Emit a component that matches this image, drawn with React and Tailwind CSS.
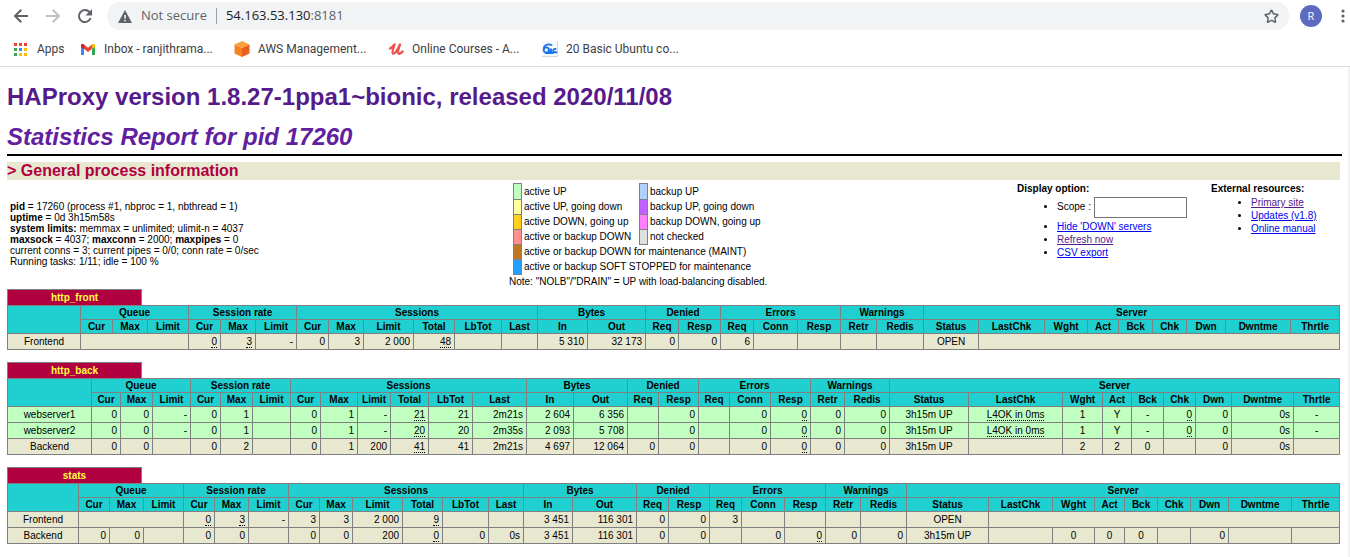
import React from "react";
import { Star } from "lucide-react";

const tip = (text) => ({ text, tip: true });
const blank = (span) => ({ text: "", span });

const GROUPS = [
  ["Queue", 3],
  ["Session rate", 3],
  ["Sessions", 6],
  ["Bytes", 2],
  ["Denied", 2],
  ["Errors", 3],
  ["Warnings", 2],
  ["Server", 9],
];

const COLUMNS = [
  "Cur", "Max", "Limit", "Cur", "Max", "Limit",
  "Cur", "Max", "Limit", "Total", "LbTot", "Last",
  "In", "Out", "Req", "Resp", "Req", "Conn", "Resp", "Retr", "Redis",
  "Status", "LastChk", "Wght", "Act", "Bck", "Chk", "Dwn", "Dwntme", "Thrtle",
];

const CENTERED = new Set([21, 22, 23, 24, 25, 29]);

const PROXIES = [
  {
    name: "http_front",
    widths: [73, 32, 35, 41, 32, 35, 41, 32, 35, 50, 41, 47, 36, 50, 58, 33, 42, 33, 44, 43, 36, 47, 55, 66, 43, 31, 34, 34, 39, 65, 49],
    rows: [
      {
        name: "Frontend",
        cells: [blank(3), tip("0"), tip("3"), "-", "0", "3", "2 000", tip("48"), "", "", "5 310", "32 173", "0", "0", "6", "", "", "", "", "OPEN", blank(8)],
      },
    ],
  },
  {
    name: "http_back",
    widths: [84, 29, 32, 38, 30, 32, 38, 30, 37, 33, 38, 44, 54, 47, 54, 31, 40, 31, 41, 40, 34, 45, 79, 94, 40, 29, 32, 32, 36, 62, 46],
    rows: [
      {
        name: "webserver1",
        up: true,
        cells: ["0", "0", "-", "0", "1", "", "0", "1", "-", tip("21"), "21", "2m21s", "2 604", "6 356", "", "0", "", "0", tip("0"), "0", "0", "3h15m UP", tip("L4OK in 0ms"), "1", "Y", "-", tip("0"), "0", "0s", "-"],
      },
      {
        name: "webserver2",
        up: true,
        cells: ["0", "0", "-", "0", "1", "", "0", "1", "-", tip("20"), "20", "2m35s", "2 093", "5 708", "", "0", "", "0", tip("0"), "0", "0", "3h15m UP", tip("L4OK in 0ms"), "1", "Y", "-", tip("0"), "0", "0s", "-"],
      },
      {
        name: "Backend",
        cells: ["0", "0", "", "0", "2", "", "0", "1", "200", tip("41"), "41", "2m21s", "4 697", "12 064", "0", "0", "", "0", tip("0"), "0", "0", "3h15m UP", "", "2", "2", "0", "", "0", "0s", ""],
      },
    ],
  },
  {
    name: "stats",
    widths: [71, 31, 34, 40, 31, 34, 40, 31, 33, 50, 40, 46, 35, 49, 64, 32, 41, 32, 43, 41, 35, 46, 82, 64, 42, 30, 33, 33, 38, 63, 48],
    rows: [
      {
        name: "Frontend",
        cells: [blank(3), tip("0"), tip("3"), "-", "3", "3", "2 000", tip("9"), "", "", "3 451", "116 301", "0", "0", "3", "", "", "", "", "OPEN", blank(8)],
      },
      {
        name: "Backend",
        cells: ["0", "0", "", "0", "0", "", "0", "0", "200", tip("0"), "0", "0s", "3 451", "116 301", "0", "0", "", "0", tip("0"), "0", "0", "3h15m UP", "", "0", "0", "0", "", "0", "", ""],
      },
    ],
  },
];

function DataCells({ cells }) {
  let column = 0;
  return cells.map((cell, i) => {
    const { text, tip: hasTip, span = 1 } = typeof cell === "string" ? { text: cell } : cell;
    const align = CENTERED.has(column) ? "text-center" : "text-right";
    column += span;
    return (
      <td key={i} colSpan={span} className={`border border-[#808080] px-[3px] py-0 ${align}`}>
        {hasTip ? <span className="border-b border-dotted border-black">{text}</span> : text}
      </td>
    );
  });
}

function ProxyTable({ name, widths, rows }) {
  return (
    <section className="mb-3">
      <h4 className="flex h-4 w-[135px] items-center justify-center border border-b-0 border-[#808080] bg-[#b00040] font-bold text-[#ffff40]">
        {name}
      </h4>
      <table className="w-full table-fixed border-collapse whitespace-nowrap">
        <colgroup>
          {widths.map((w, i) => (
            <col key={i} style={{ width: w }} />
          ))}
        </colgroup>
        <thead className="bg-[#20d0d0]">
          <tr className="h-[14px]">
            <th rowSpan={2} className="border border-[#808080] p-0" />
            {GROUPS.map(([label, span]) => (
              <th key={label} colSpan={span} className="border border-[#808080] p-0">
                {label}
              </th>
            ))}
          </tr>
          <tr className="h-[14px]">
            {COLUMNS.map((label, i) => (
              <th key={i} className="border border-[#808080] p-0">
                {label}
              </th>
            ))}
          </tr>
        </thead>
        <tbody>
          {rows.map((row) => (
            <tr key={row.name} className={row.up ? "h-4 bg-[#c0ffc0]" : "h-4 bg-[#e8e8d0]"}>
              <td className="border border-[#808080] p-0 text-center">{row.name}</td>
              <DataCells cells={row.cells} />
            </tr>
          ))}
        </tbody>
      </table>
    </section>
  );
}

function Swatch({ color }) {
  return <span className={`-mb-px self-stretch border border-[#808080] ${color}`} />;
}

function Legend() {
  const pairs = [
    ["bg-[#c0ffc0]", "active UP", "bg-[#b0d0ff]", "backup UP"],
    ["bg-[#ffffa0]", "active UP, going down", "bg-[#c060ff]", "backup UP, going down"],
    ["bg-[#ffd020]", "active DOWN, going up", "bg-[#ff80ff]", "backup DOWN, going up"],
    ["bg-[#ff9090]", "active or backup DOWN", "bg-[#e0e0e0]", "not checked"],
  ];
  return (
    <div className="pt-[3px] whitespace-nowrap">
      <div className="ml-1 grid grid-cols-[9px_113px_9px_1fr] grid-rows-[16px] auto-rows-[15px] items-center gap-x-[2px]">
        {pairs.map(([c1, t1, c2, t2]) => (
          <React.Fragment key={t1}>
            <Swatch color={c1} />
            <span>{t1}</span>
            <Swatch color={c2} />
            <span>{t2}</span>
          </React.Fragment>
        ))}
        <Swatch color="bg-[#c07820]" />
        <span className="col-span-3">active or backup DOWN for maintenance (MAINT)</span>
        <Swatch color="bg-[#20a0ff]" />
        <span className="col-span-3">active or backup SOFT STOPPED for maintenance</span>
      </div>
      <p className="pt-[2px]">Note: "NOLB"/"DRAIN" = UP with load-balancing disabled.</p>
    </div>
  );
}

function BrowserBar() {
  return (
    <header className="border-b border-[#dadce0] bg-white font-['Open_Sans',sans-serif] text-[#3c4043]">
      <div className="flex h-8 items-center pr-[3px] pl-[13px]">
        <button aria-label="Back" className="mr-4 size-4 text-[#5f6368]">
          <svg viewBox="0 0 16 16" className="size-4" fill="none" stroke="currentColor" strokeWidth="2">
            <path d="M15 8H2.500M8.300 1.700 2 8l6.300 6.300" />
          </svg>
        </button>
        <button aria-label="Forward" className="mr-4 size-4 text-[#bdc1c6]">
          <svg viewBox="0 0 16 16" className="size-4" fill="none" stroke="currentColor" strokeWidth="2">
            <path d="M1 8h12.500M7.700 1.700 14 8l-6.300 6.300" />
          </svg>
        </button>
        <button aria-label="Reload" className="mr-[14px] size-4 text-[#5f6368]">
          <svg viewBox="0 0 16 16" className="size-4">
            <path d="M13.600 10A6 6 0 1 1 12.400 4" fill="none" stroke="currentColor" strokeWidth="2" />
            <path d="M15 1v6.500H8.500Z" fill="currentColor" />
          </svg>
        </button>
        <div className="flex h-7 grow items-center rounded-full bg-[#f1f3f4] pr-[10px] pl-[11px] text-[13px]">
          <svg viewBox="0 0 14 13" className="mr-[9px] h-[13px] w-[14px]">
            <path d="M7 0 14 13H0Z" fill="#5f6368" />
            <path d="M6.300 5h1.500v3.500H6.300zM6.300 9.700h1.500v1.500H6.300z" fill="#fff" />
          </svg>
          <span className="text-[#5f6368]">Not secure</span>
          <span className="mx-[9px] h-4 w-px bg-[#9aa0a6]" />
          <span className="grow text-[#202124]">
            54.163.53.130<span className="text-[#5f6368]">:8181</span>
          </span>
          <button aria-label="Bookmark this tab">
            <Star className="size-[15px] text-[#5f6368]" strokeWidth={2.4} />
          </button>
        </div>
        <button className="ml-[11px] flex size-[22px] items-center justify-center rounded-full bg-[#5c6bc0] text-[11px] text-white">
          R
        </button>
        <button aria-label="Menu" className="ml-[17px] text-[#5f6368]">
          <svg viewBox="0 0 8 16" className="h-4 w-2" fill="currentColor">
            <circle cx="4" cy="3" r="1.600" />
            <circle cx="4" cy="8" r="1.600" />
            <circle cx="4" cy="13" r="1.600" />
          </svg>
        </button>
      </div>
      <nav className="flex h-[34px] items-center pl-[14px] font-[Roboto,sans-serif] text-[12px] whitespace-nowrap">
        <a href="#apps" className="flex w-[66px] items-center gap-[10px]">
          <svg viewBox="0 0 13 13" className="size-[13px]">
            <path d="M0 0h3v3H0zM5 0h3v3H5zM10 0h3v3h-3z" fill="#ea4335" />
            <path d="M0 5h3v3H0z" fill="#34a853" />
            <path d="M5 5h3v3H5z" fill="#4285f4" />
            <path d="M10 5h3v3h-3zM5 10h3v3H5zM10 10h3v3h-3z" fill="#fbbc04" />
            <path d="M0 10h3v3H0z" fill="#34a853" />
          </svg>
          Apps
        </a>
        <a href="#inbox" className="flex w-[154px] items-center gap-2">
          <svg viewBox="0 0 16 12" className="h-3 w-4">
            <path d="M1 3v9h3V5z" fill="#4285f4" />
            <path d="M15 3v9h-3V5z" fill="#34a853" />
            <path d="M4 1.500 8 4.800l4-3.300v4.300L8 9 4 5.800z" fill="#ea4335" />
            <path d="M12 1.500c1.500-1.500 3-.5 3 1V4l-3 2z" fill="#fbbc04" />
            <path d="M4 1.500C2.500 0 1 1 1 2.500V4l3 2z" fill="#c5221f" />
          </svg>
          Inbox - ranjithrama...
        </a>
        <a href="#aws" className="flex w-[154px] items-center gap-2">
          <svg viewBox="0 0 16 16" className="size-4">
            <path d="M8 0 15.500 3.500 8 7 .5 3.500z" fill="#f9a03c" />
            <path d="M.5 3.500 8 7v9L.5 12.500z" fill="#f58220" />
            <path d="M15.500 3.500 8 7v9l7.500-3.500z" fill="#e8601c" />
          </svg>
          AWS Management...
        </a>
        <a href="#courses" className="flex w-[154px] items-center gap-2">
          <svg viewBox="0 0 16 14" className="h-[14px] w-4" fill="none" stroke="#ec5252" strokeWidth="2.400" strokeLinecap="round" strokeLinejoin="round">
            <path d="M2 6.500C4 5.500 5.500 4 6.500 2.500 5.500 5.500 3.500 10.500 5 11.500 7 12.500 10 7 12 2.500 11 5.500 9 10.500 10.500 11.500c1.200.7 2.800-.5 4-2" />
          </svg>
          Online Courses - A...
        </a>
        <a href="#ubuntu" className="flex items-center gap-2">
          <svg viewBox="0 0 16 16" className="size-4" fill="none" stroke="#1a73f0" strokeWidth="1.900" strokeLinecap="round">
            <path d="M0 0h16v16H0z" fill="#f6f8fb" stroke="none" />
            <path d="M15.500 0v15.500H0" stroke="#d5d8dc" strokeWidth="1" />
            <circle cx="4.300" cy="9" r="2.600" />
            <path d="M1.700 7.500C2 4 6 2.500 9.500 4M6.500 11c1.500 1 2.500-.5 2.500-3.500v4M13.500 8c-2.800-.8-3.200 3.300-.5 3.300h1.500M4 12h7" />
          </svg>
          20 Basic Ubuntu co...
        </a>
      </nav>
    </header>
  );
}

export default function App() {
  return (
    <div className="flex min-h-screen flex-col bg-white">
      <BrowserBar />
      <main className="grow border-r-2 border-[#f1f1f1] pl-[7px] font-['Liberation_Sans',Arial,sans-serif] text-[10px] leading-[11px] text-black">
        <h1 className="pt-4 text-[24px] leading-7 font-bold text-[#551a8b]">
          <a href="#haproxy">HAProxy version 1.8.27-1ppa1~bionic, released 2020/11/08</a>
        </h1>
        <h2 className="mt-3 text-[24px] leading-7 font-bold text-[#6020a0] italic">
          <a href="#report">Statistics Report for pid 17260</a>
        </h2>
        <hr className="mt-[3px] mr-[6px] border-t-2 border-black" />
        <div className="pr-2">
          <h3 className="mt-[6px] bg-[#e8e8d0] text-[16px] leading-[18px] font-bold text-[#b00040]">
            &gt; General process information
          </h3>
          <div className="grid h-[109px] grid-cols-[502fr_508fr_194fr_129fr]">
            <div className="pt-[21px] pl-[3px]">
              <p><b>pid</b> = 17260 (process #1, nbproc = 1, nbthread = 1)</p>
              <p><b>uptime</b> = 0d 3h15m58s</p>
              <p><b>system limits:</b> memmax = unlimited; ulimit-n = 4037</p>
              <p><b>maxsock</b> = 4037; <b>maxconn</b> = 2000; <b>maxpipes</b> = 0</p>
              <p>current conns = 3; current pipes = 0/0; conn rate = 0/sec</p>
              <p>Running tasks: 1/11; idle = 100 %</p>
            </div>
            <Legend />
            <div className="pt-[3px]">
              <b>Display option:</b>
              <ul className="list-disc pl-10 leading-[13px] text-[#0000ee] marker:text-black">
                <li className="leading-[26px] text-black">
                  <label htmlFor="scope">Scope : </label>
                  <input id="scope" type="text" className="h-[21px] w-[93px] border border-[#767676] bg-white px-1 align-middle" />
                </li>
                <li><a href="#hide" className="underline">Hide 'DOWN' servers</a></li>
                <li><a href="#refresh" className="text-[#551a8b] underline">Refresh now</a></li>
                <li><a href="#csv" className="underline">CSV export</a></li>
              </ul>
            </div>
            <div className="pt-[3px]">
              <b>External resources:</b>
              <ul className="list-disc pt-[2px] pl-10 leading-[13px] text-[#0000ee] marker:text-black">
                <li><a href="#primary" className="text-[#551a8b] underline">Primary site</a></li>
                <li><a href="#updates" className="underline">Updates (v1.8)</a></li>
                <li><a href="#manual" className="underline">Online manual</a></li>
              </ul>
            </div>
          </div>
          {PROXIES.map((proxy) => (
            <ProxyTable key={proxy.name} {...proxy} />
          ))}
        </div>
      </main>
    </div>
  );
}
